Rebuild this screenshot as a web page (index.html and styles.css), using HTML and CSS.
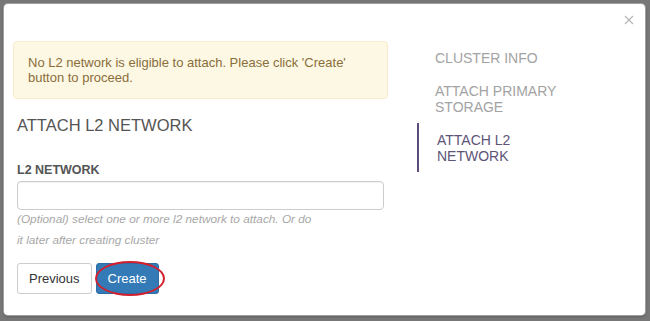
FILE: index.html
```html
<!DOCTYPE html>
<html>
<head>
<meta charset="utf-8">
<link rel="stylesheet" href="styles.css">
</head>
<body>
<div class="modal">
  <button class="close" aria-label="Close">
    <svg width="10" height="10" viewBox="0 0 10 10"><path d="M1 1 L9 9 M9 1 L1 9" stroke="#b5b5b5" stroke-width="1.1" fill="none"/></svg>
  </button>
  <div class="body">
    <div class="main">
      <div class="alert">No L2 network is eligible to attach. Please click 'Create' button to proceed.</div>
      <div class="form">
        <h3 class="title">ATTACH L2 NETWORK</h3>
        <label class="label">L2 NETWORK</label>
        <input class="input" type="text">
        <p class="help">(Optional) select one or more l2 network to attach. Or do it later after creating cluster</p>
        <div class="actions">
          <button class="btn btn-default">Previous</button>
          <button class="btn btn-primary">Create<span class="ring"></span></button>
        </div>
      </div>
    </div>
    <ul class="steps">
      <li class="step">CLUSTER INFO</li>
      <li class="step">ATTACH PRIMARY STORAGE</li>
      <li class="step active">ATTACH L2 NETWORK</li>
    </ul>
  </div>
</div>
</body>
</html>
```

FILE: styles.css
```css
* { box-sizing: border-box; }
html, body { margin: 0; height: 100%; }
body {
  background: #777777;
  padding: 4px 5px 6px 4px;
  font-family: "Liberation Sans", Arial, sans-serif;
}
.modal {
  position: relative;
  background: #ffffff;
  height: 311px;
  border-radius: 4px;
  box-shadow: 0 0 0 1px #a0a0a0, 0 1px 3px rgba(0,0,0,0.4);
}
.close {
  position: absolute;
  top: 10px;
  right: 10px;
  width: 12px;
  height: 12px;
  padding: 0;
  border: 0;
  background: none;
  display: flex;
  align-items: center;
  justify-content: center;
}
.body {
  display: flex;
  padding: 37px 0 0 9px;
}
.main {
  width: 375px;
  flex: none;
}
.alert {
  background: #fcf8e3;
  border: 1px solid #faebcc;
  color: #8a6d3b;
  border-radius: 4px;
  padding: 13px 15px 13px 14px;
  font-size: 13px;
  line-height: 15px;
}
.form { padding-left: 4px; }
.title {
  margin: 16px 0 0;
  font-size: 16.5px;
  font-weight: normal;
  line-height: 20px;
  color: #555555;
}
.label {
  display: block;
  margin-top: 26px;
  font-size: 12.5px;
  font-weight: bold;
  line-height: 18px;
  color: #555555;
}
.input {
  display: block;
  width: 367px;
  height: 29px;
  margin-top: 2px;
  border: 1px solid #cccccc;
  border-radius: 4px;
  box-shadow: inset 0 1px 1px rgba(0,0,0,0.05);
}
.help {
  margin: -1px 0 0;
  font-size: 11.8px;
  font-style: italic;
  line-height: 21px;
  color: #a8a8a8;
  width: 300px;
}
.actions {
  display: flex;
  gap: 4px;
  margin-top: 12px;
}
.btn {
  position: relative;
  font-family: "Liberation Sans", Arial, sans-serif;
  font-size: 13px;
  line-height: 17px;
  padding: 6px 11px;
  border-radius: 3px;
  border: 1px solid;
  height: 31px;
}
.btn-default {
  background: #ffffff;
  border-color: #cccccc;
  color: #333333;
}
.btn-primary {
  background: #337ab7;
  border-color: #2e6da4;
  color: #ffffff;
}
.ring {
  position: absolute;
  left: -2px;
  top: -3px;
  width: 70px;
  height: 35px;
  border: 2px solid #d3202e;
  border-radius: 50%;
}
.steps {
  list-style: none;
  margin: 0 0 0 29px;
  padding: 0;
  width: 200px;
}
.step {
  padding: 9px 0 8px 18px;
  font-size: 14px;
  line-height: 16px;
  color: #a3a3a3;
  width: 150px;
}
.step.active {
  border-left: 2px solid #5b4a7a;
  color: #5d5478;
  padding-left: 18px;
}
```
